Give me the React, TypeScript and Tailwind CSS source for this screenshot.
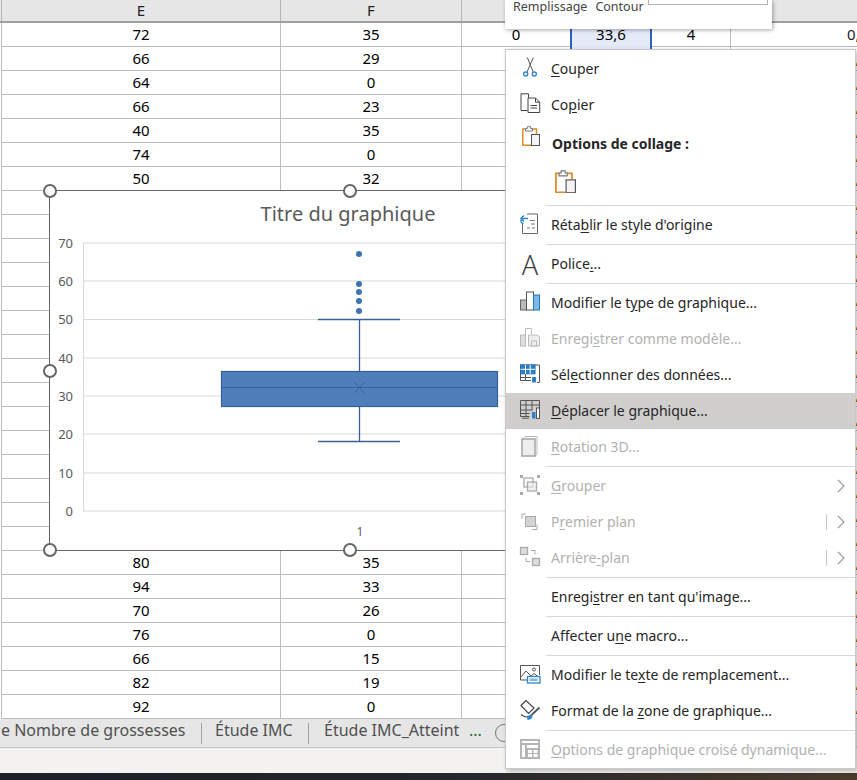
import React from "react";

const UI = "font-['Noto_Sans',sans-serif]";

type Row = { e: string; f: string };

const top: Row[] = [
  { e: "72", f: "35" },
  { e: "66", f: "29" },
  { e: "64", f: "0" },
  { e: "66", f: "23" },
  { e: "40", f: "35" },
  { e: "74", f: "0" },
  { e: "50", f: "32" },
];
const bottom: Row[] = [
  { e: "80", f: "35" },
  { e: "94", f: "33" },
  { e: "70", f: "26" },
  { e: "76", f: "0" },
  { e: "66", f: "15" },
  { e: "82", f: "19" },
  { e: "92", f: "0" },
];
const blank: Row[] = Array.from({ length: 15 }, () => ({ e: "", f: "" }));
const rows = [...top, ...blank, ...bottom];

const cols = "grid grid-cols-[2px_279px_181px_109px_81px_79px_150px]";

const Svg = ({ children }: { children: React.ReactNode }) => (
  <svg viewBox="0 0 24 24" className="w-6 h-6 overflow-visible shrink-0" fill="none" strokeWidth="1">
    {children}
  </svg>
);

const Clip = ({ size }: { size: number }) => (
  <svg viewBox="0 0 18 20" width={size} height={(size * 20) / 18} fill="none">
    <path d="M3.5 3H.8v16.2h8.2" stroke="#e08a2c" strokeWidth="1.5" />
    <path d="M10.5 3h4v5" stroke="#e08a2c" strokeWidth="1.5" />
    <path d="M3.5 5V2.5h1.8V.7h3.4v1.8h1.8V5z" fill="#fff" stroke="#777" />
    <rect x="9.5" y="8.5" width="8" height="11" fill="#f4f4f4" stroke="#555" />
  </svg>
);

const icons: Record<string, React.ReactNode> = {
  cut: (
    <Svg>
      <path d="M15.3.5 8.9 15.3M9.3.5l6 14.8" stroke="#555" />
      <circle cx="7.7" cy="17" r="2" stroke="#2f86cf" strokeWidth="1.4" />
      <circle cx="16.3" cy="17" r="2" stroke="#2f86cf" strokeWidth="1.4" />
    </Svg>
  ),
  copy: (
    <Svg>
      <path d="M9.5 17.5H3V.8h7.5v4" stroke="#444" />
      <path d="M10 5h7.5l4.2 4.2v10.3H10z" fill="#fff" stroke="#444" />
      <path d="M17.5 5v4.2h4.2M12.5 12.5h6.5M12.5 15h6.5" stroke="#444" />
    </Svg>
  ),
  reset: (
    <Svg>
      <path d="M9 1h10.5v19.5h-15V11" stroke="#666" />
      <path d="M10 5.5H5.5a2.5 2.5 0 0 0 0 5" stroke="#2f86cf" strokeWidth="1.4" />
      <path d="M6 2.5 3 5.500l3 3" stroke="#2f86cf" strokeWidth="1.4" />
      <path d="M12 7.500h5M13 11h4M9 15h3M14 15h3" stroke="#777" />
    </Svg>
  ),
  type: (
    <Svg>
      <rect x="2.500" y="9" width="6" height="10" fill="#bbb" stroke="#666" />
      <rect x="8.500" y="1" width="7" height="18" fill="#fff" stroke="#555" />
      <rect x="15.500" y="4" width="6" height="15" fill="#7fb6e2" stroke="#1f78c1" />
    </Svg>
  ),
  template: (
    <Svg>
      <rect x="2.500" y="8" width="5" height="11" fill="#ddd" stroke="#bbb" />
      <path d="M7.500 19V1.500h6V7" stroke="#bbb" />
      <path d="M10.500 8h9l2 2v9h-11z" fill="#eee" stroke="#bbb" />
      <rect x="13.500" y="14" width="5" height="5" stroke="#bbb" />
    </Svg>
  ),
  select: (
    <Svg>
      <rect x="2.500" y="1.800" width="14.500" height="9" fill="#2f80c8" stroke="#1f6fb5" />
      <path d="M7.500 2v9M12.200 2v9M2.500 6.300H17" stroke="#fff" />
      <path d="M2.500 11v6.500H13M7.500 11v6.500M2.500 14.500H13M17 2h4.500v17.500H19" stroke="#555" />
      <rect x="14" y="14" width="4" height="5.500" fill="#2f80c8" />
    </Svg>
  ),
  move: (
    <Svg>
      <path d="M2.500 1.500h19v11M2.500 1.500v16h9M2.500 6h19M8 1.500v16M14 1.500V11M2.500 11h12M2.500 14.500h9" stroke="#555" />
      <path d="M4 19.200h7" stroke="#555" />
      <rect x="14" y="13" width="3.500" height="6.500" fill="#2f80c8" />
      <rect x="18.500" y="9" width="3" height="10.500" fill="#fff" stroke="#555" />
    </Svg>
  ),
  rotate: (
    <Svg>
      <path d="M4 4.500 7 1.500h12v18l-2 1.500" stroke="#bbb" />
      <rect x="4" y="4" width="13" height="17" fill="#eee" stroke="#aaa" strokeWidth="1.6" />
    </Svg>
  ),
  group: (
    <Svg>
      <rect x="6" y="4" width="9" height="9" stroke="#aaa" strokeWidth="1.3" />
      <rect x="9.500" y="8" width="9" height="9" stroke="#aaa" strokeWidth="1.3" fill="#e8e8e8" fillOpacity=".6" />
      <rect x="2" y="1" width="3" height="3" fill="#aaa" />
      <rect x="19" y="1" width="3" height="3" fill="#aaa" />
      <rect x="2" y="18" width="3" height="3" fill="#aaa" />
      <rect x="19" y="18" width="3" height="3" fill="#aaa" />
    </Svg>
  ),
  front: (
    <Svg>
      <path d="M8 4H4v5M19 14.500v5h-5" stroke="#aaa" />
      <rect x="7.500" y="6.500" width="10" height="10" fill="#d4d4d4" stroke="#aaa" />
    </Svg>
  ),
  back: (
    <Svg>
      <rect x="2.500" y="1.500" width="7" height="7" fill="#ddd" stroke="#aaa" strokeWidth="1.3" />
      <path d="M8 11.500v4h4M13 4.500h4v4" stroke="#aaa" />
      <rect x="14.500" y="12.500" width="7" height="7" fill="#ddd" stroke="#aaa" strokeWidth="1.3" />
    </Svg>
  ),
  alt: (
    <Svg>
      <path d="M11 17H2.500V2.500h19V12" stroke="#555" />
      <path d="M3 14l5-6 5 5 3-2.500 4 3" stroke="#555" />
      <circle cx="16" cy="6.500" r="1.500" stroke="#555" />
      <rect x="9.500" y="13.500" width="12.500" height="6.500" fill="#fff" stroke="#2f86cf" strokeWidth="1.3" />
      <rect x="11.500" y="15.500" width="8" height="2.500" fill="#7fb6e2" />
    </Svg>
  ),
  format: (
    <Svg>
      <path d="M3 6.500 8 1.500l8 7.500-5.500 5.500z" fill="#fff" stroke="#444" strokeWidth="1.200" />
      <path d="M3 15.500c3 2.500 6 3 7 1.500" stroke="#444" strokeWidth="1.200" />
      <path d="M21.500 8.500 13.500 16" stroke="#555" strokeWidth="1.800" />
      <path d="M9 20.500c0-3 2-5.500 4.500-5l1 1.500c0 3-3 4.500-5.500 3.500z" fill="#2f86cf" />
    </Svg>
  ),
  pivot: (
    <Svg>
      <rect x="2" y="1" width="20" height="20" fill="#b5b5b5" />
      <rect x="4" y="3" width="16" height="2" fill="#fff" />
      <rect x="4" y="7" width="3" height="12" fill="#fff" />
      <rect x="9" y="7" width="11" height="3" fill="#fff" />
      <rect x="10" y="12" width="4" height="3" fill="#fff" />
      <rect x="15.500" y="12" width="4" height="3" fill="#fff" />
      <rect x="10" y="16" width="4" height="3" fill="#fff" />
      <rect x="15.500" y="16" width="4" height="3" fill="#fff" />
    </Svg>
  ),
};

type Item =
  | { sep: true }
  | {
      label: [string, string, string];
      icon?: React.ReactNode;
      off?: boolean;
      hot?: boolean;
      arrow?: boolean;
      split?: boolean;
    };

const before: Item[] = [
  { label: ["", "C", "ouper"], icon: icons.cut },
  { label: ["Co", "p", "ier"], icon: icons.copy },
];

const after: Item[] = [
  { sep: true },
  { label: ["Réta", "b", "lir le style d'origine"], icon: icons.reset },
  { sep: true },
  {
    label: ["Police", ".", ".."],
    icon: (
      <span className={`w-6 h-6 flex items-center justify-center text-[27px] font-light leading-none text-[#444] ${UI}`}>
        A
      </span>
    ),
  },
  { sep: true },
  { label: ["Modifier le t", "y", "pe de graphique..."], icon: icons.type },
  { label: ["Enregi", "s", "trer comme modèle..."], icon: icons.template, off: true },
  { label: ["Sél", "e", "ctionner des données..."], icon: icons.select },
  { label: ["", "D", "éplacer le graphique..."], icon: icons.move, hot: true },
  { label: ["", "R", "otation 3D..."], icon: icons.rotate, off: true },
  { sep: true },
  { label: ["", "G", "rouper"], icon: icons.group, off: true, arrow: true },
  { label: ["P", "r", "emier plan"], icon: icons.front, off: true, arrow: true, split: true },
  { label: ["Arrière", "-", "plan"], icon: icons.back, off: true, arrow: true, split: true },
  { sep: true },
  { label: ["Enregi", "s", "trer en tant qu'image..."] },
  { sep: true },
  { label: ["Affecter u", "n", "e macro..."] },
  { sep: true },
  { label: ["Modifier le te", "x", "te de remplacement..."], icon: icons.alt },
  { label: ["Format de la ", "z", "one de graphique..."], icon: icons.format },
  { sep: true },
  { label: ["", "O", "ptions de graphique croisé dynamique..."], icon: icons.pivot, off: true },
];

const MenuRows = ({ items }: { items: Item[] }) => (
  <>
    {items.map((it, i) => {
      if ("sep" in it) {
        return (
          <div key={i} className="h-[3px] pl-[40px] flex items-center">
            <div className="h-px w-full bg-[#d7d7d7]" />
          </div>
        );
      }
      return (
        <div
          key={i}
          className={`h-9 flex items-center pl-[12px] ${it.hot ? "bg-[#d0cfcd]" : ""} ${
            it.off ? "text-[#b1b1b1]" : "text-[#262626]"
          }`}
        >
          <span className="w-6 h-6 shrink-0">{it.icon}</span>
          <span className="ml-[9px] mb-[2px] whitespace-nowrap">
            {it.label[0]}
            <u className="underline-offset-2">{it.label[1]}</u>
            {it.label[2]}
          </span>
          {it.arrow && (
            <div className="ml-auto flex items-center h-full">
              {it.split && <div className="w-px h-[16px] bg-[#c8c8c8]" />}
              <svg width="8" height="14" viewBox="0 0 8 14" fill="none" className="ml-[10px] mr-[10px]">
                <path d="M1 1l6 6-6 6" stroke="#999" strokeWidth="1.100" />
              </svg>
            </div>
          )}
        </div>
      );
    })}
  </>
);

const Handle = ({ className }: { className: string }) => (
  <span className={`absolute w-[14px] h-[14px] rounded-full bg-white border-[2.5px] border-[#666] ${className}`} />
);

const Chart = () => {
  const grid = [243, 281, 319.5, 358, 396, 434, 473, 511];
  const labels = ["70", "60", "50", "40", "30", "20", "10", "0"];
  return (
    <div className="absolute left-[49px] top-[190px] w-[500px] h-[361px] bg-white border-t border-b border-l border-[#666]">
      <svg viewBox="49 190 500 361" className="absolute left-[-1px] top-[-1px] w-[500px] h-[361px]">
        <text x="348" y="220.500" textAnchor="middle" fontSize="20" fill="#595959" fontFamily="Noto Sans">
          Titre du graphique
        </text>
        <path d="M83.500 243v268" stroke="#d9d9d9" />
        {grid.map((y, i) => (
          <React.Fragment key={y}>
            <path d={`M83 ${y}H505`} stroke="#d9d9d9" />
            <text x="73" y={y + 4.500} textAnchor="end" fontSize="13" fill="#595959" fontFamily="Noto Sans">
              {labels[i]}
            </text>
          </React.Fragment>
        ))}
        <text x="360" y="536" textAnchor="middle" fontSize="12" fill="#595959" fontFamily="Noto Sans">
          1
        </text>
        <path d="M318 319.500h82M318 441.500h82M359.500 319.500V371M359.500 407v34" stroke="#3c5f94" strokeWidth="1.300" />
        {[254, 284, 292, 301, 311].map((y) => (
          <circle key={y} cx="359" cy={y} r="3" fill="#3f72b3" />
        ))}
        <rect x="221.500" y="371.500" width="276" height="35" fill="#4e7fbb" stroke="#37609a" strokeWidth="1.200" />
        <path d="M221 387.500h277" stroke="#37609a" />
        <path d="M354 382l10.500 11M364.500 382 354 393" stroke="#3c6299" />
      </svg>
      <Handle className="left-[-7px] top-[-7px]" />
      <Handle className="left-[293px] top-[-7px]" />
      <Handle className="left-[-7px] top-[173px]" />
      <Handle className="left-[-7px] bottom-[-7px]" />
      <Handle className="left-[293px] bottom-[-7px]" />
    </div>
  );
};

export default function App() {
  return (
    <div className={`relative w-[857px] h-[780px] overflow-hidden bg-white ${UI}`}>
      {/* feuille */}
      <div className={`${cols} h-[23px] bg-[#e6e6e6] border-b-2 border-[#9f9f9f] text-[15px] leading-[21px] text-[#222] text-center`}>
        <div className="border-r border-[#b5b5b5]" />
        <div className="border-r border-[#b5b5b5]">E</div>
        <div className="border-r border-[#b5b5b5]">F</div>
        <div />
        <div />
        <div />
        <div />
      </div>
      {rows.map((r, i) => (
        <div key={i} className={`${cols} h-6 text-[15px] leading-[23px] text-black text-center`}>
          <div className="border-r border-[#bdbdbd]" />
          <div className="border-r border-b border-[#bdbdbd]">{r.e}</div>
          <div className="border-r border-b border-[#bdbdbd]">{r.f}</div>
          <div className="border-r border-b border-[#bdbdbd]">{i === 0 ? "0" : ""}</div>
          <div className={i < 2 ? "-ml-[1px] border-x-2 border-[#2b62c0] bg-[#e4ebf6]" : "border-r border-b border-[#bdbdbd]"}>
            {i === 0 ? "33,6" : ""}
          </div>
          <div className="border-r border-b border-[#bdbdbd]">{i === 0 ? "4" : ""}</div>
          <div className="border-b border-[#bdbdbd] pl-[116px] text-left text-[#1c1c1c]">0,627</div>
        </div>
      ))}

      {/* onglets */}
      <div className="h-[29px] bg-[#e6e6e6] border-b border-[#c4c4c4] flex items-center text-[16px] text-[#505050] whitespace-nowrap">
        <span className="ml-[1px] w-[200px] mb-[7px]">e Nombre de grossesses</span>
        <span className="w-px h-[21px] bg-[#a0a0a0]" />
        <span className="ml-[13px] w-[93px] mb-[7px]">Étude IMC</span>
        <span className="w-px h-[21px] bg-[#a0a0a0]" />
        <span className="ml-[15px] w-[138px] mb-[7px]">Étude IMC_Atteint</span>
        <span className="ml-[7px] w-[26px] mb-[7px] text-[#1e6b3a]">...</span>
        <span className="w-[18px] h-[18px] shrink-0 rounded-full border border-[#777]" />
      </div>
      <div className="h-[25px] bg-[#f3f2f1]" />
      <div className="h-[7px] bg-gradient-to-r from-[#1c2026] via-[#23262b] to-[#4a3a2a]" />

      <Chart />

      {/* mini barre */}
      <div className="absolute left-[505px] top-0 w-[267px] h-[29px] bg-white shadow-[1px_1px_4px_rgba(0,0,0,.35)] flex items-start pl-[8px] text-[12.500px] leading-[13px] text-[#444]">
        <span>Remplissage</span>
        <span className="ml-[8px]">Contour</span>
        <div className="ml-[4px] w-[120px] h-[5px] border border-t-0 border-[#b0b0b0]" />
      </div>

      {/* menu contextuel */}
      <div className="absolute left-[505px] top-[49px] w-[351px] h-[720px] bg-white border border-[#c9c9c9] shadow-[2px_2px_5px_rgba(0,0,0,.25)] pt-[1px] text-[14px]">
        <MenuRows items={before} />
        <div className="h-[39px] flex items-end pb-[8px] pl-[46px] font-bold text-[#262626]">
          <span className="absolute left-[16px] top-[76px]">
            <Clip size={18} />
          </span>
          Options de collage :
        </div>
        <div className="h-[42px] pl-[49px] pt-[8px]">
          <Clip size={21} />
        </div>
        <MenuRows items={after} />
      </div>
    </div>
  );
}
